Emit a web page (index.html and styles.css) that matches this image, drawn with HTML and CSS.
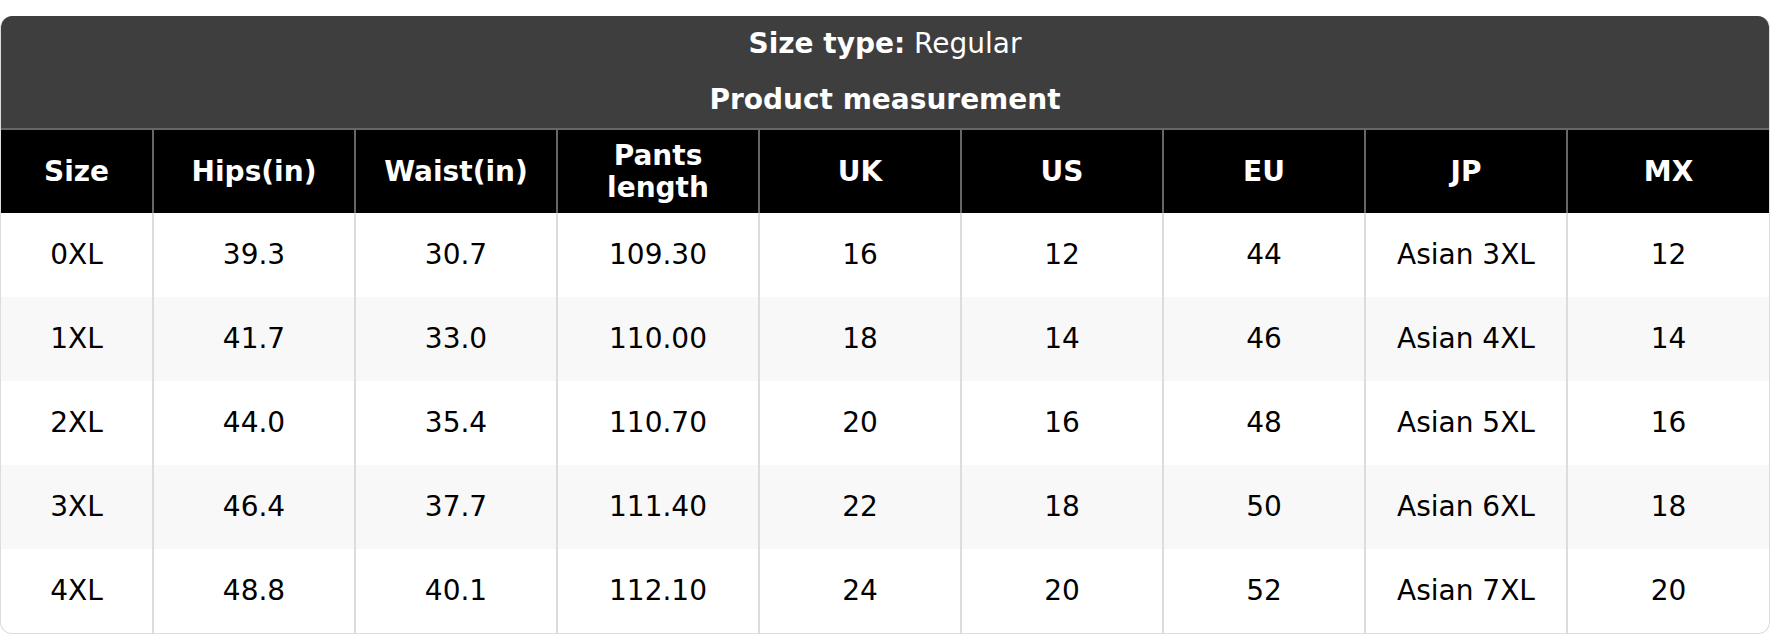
FILE: index.html
```html
<!DOCTYPE html>
<html lang="en">
<head>
<meta charset="utf-8">
<title>Size chart</title>
<link rel="stylesheet" href="styles.css">
</head>
<body>
<div class="card">
  <div class="caption">
    <div class="caption-line"><b>Size type:</b> Regular</div>
    <div class="caption-line"><b>Product measurement</b></div>
  </div>
  <table class="chart">
    <colgroup>
      <col class="c-first">
      <col class="c-std"><col class="c-std"><col class="c-std"><col class="c-std">
      <col class="c-std"><col class="c-std"><col class="c-std"><col class="c-std">
    </colgroup>
    <thead>
      <tr>
        <th>Size</th><th>Hips(in)</th><th>Waist(in)</th><th>Pants<br>length</th>
        <th>UK</th><th>US</th><th>EU</th><th>JP</th><th>MX</th>
      </tr>
    </thead>
    <tbody>
      <tr><td>0XL</td><td>39.3</td><td>30.7</td><td>109.30</td><td>16</td><td>12</td><td>44</td><td>Asian 3XL</td><td>12</td></tr>
      <tr><td>1XL</td><td>41.7</td><td>33.0</td><td>110.00</td><td>18</td><td>14</td><td>46</td><td>Asian 4XL</td><td>14</td></tr>
      <tr><td>2XL</td><td>44.0</td><td>35.4</td><td>110.70</td><td>20</td><td>16</td><td>48</td><td>Asian 5XL</td><td>16</td></tr>
      <tr><td>3XL</td><td>46.4</td><td>37.7</td><td>111.40</td><td>22</td><td>18</td><td>50</td><td>Asian 6XL</td><td>18</td></tr>
      <tr><td>4XL</td><td>48.8</td><td>40.1</td><td>112.10</td><td>24</td><td>20</td><td>52</td><td>Asian 7XL</td><td>20</td></tr>
    </tbody>
  </table>
</div>
</body>
</html>
```
FILE: styles.css
```css
html, body {
  margin: 0;
  padding: 0;
  background: #ffffff;
}

body {
  font-family: "DejaVu Sans", Verdana, sans-serif;
  font-size: 28px;
  line-height: 32px;
  color: #000;
  padding-top: 16px;
}

.card {
  width: 1770px;
  box-sizing: border-box;
  border: 1px solid #dcdcdc;
  border-top: none;
  border-radius: 12px;
  overflow: hidden;
}

.caption {
  background: #3e3e3e;
  color: #fff;
  text-align: center;
}

.caption-line {
  padding: 12px 0;
}

.chart {
  width: 100%;
  border-collapse: collapse;
  table-layout: fixed;
}

.c-first { width: 152px; }
.c-std { width: 202px; }

.chart th {
  background: #000;
  color: #fff;
  font-weight: bold;
  padding: 10px 6px 9px;
  border-top: 2px solid #666;
  border-left: 2px solid #666;
  text-align: center;
  vertical-align: middle;
}

.chart th:first-child { border-left: none; }

.chart td {
  padding: 26px 6px 26px;
  text-align: center;
  vertical-align: middle;
  border-left: 2px solid #dcdcdc;
}

.chart td:first-child { border-left: none; }

.chart tbody tr:nth-child(even) td {
  background: #f8f8f8;
}
```
